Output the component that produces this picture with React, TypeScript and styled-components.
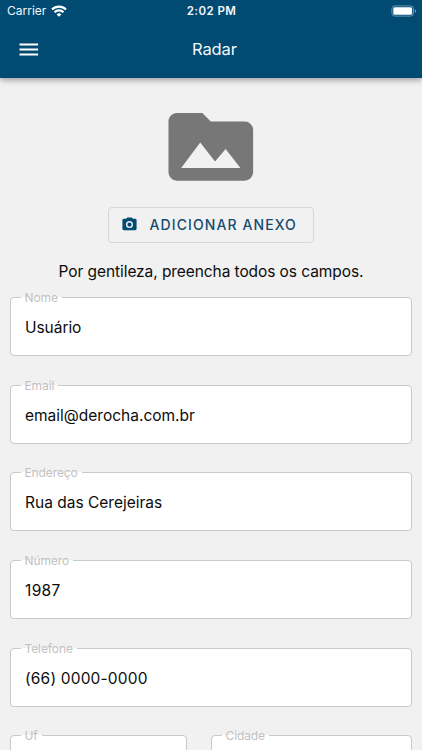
import React from "react";
import styled, { createGlobalStyle } from "styled-components";

const GlobalStyle = createGlobalStyle`
  * { box-sizing: border-box; }
  html, body { margin: 0; padding: 0; background: #f1f1f1; }
  body { height: 750px; overflow: hidden; font-family: Inter, Roboto, sans-serif; }
`;

const Screen = styled.div`
  width: 422px;
  height: 750px;
  overflow: hidden;
  display: flex;
  flex-direction: column;
  background: #f1f1f1;
`;

const Header = styled.header`
  height: 77.5px;
  flex: none;
  background: #014b73;
  color: #f2f7fa;
  box-shadow: 0 2px 6px rgba(0, 0, 0, 0.36);
`;

const StatusBar = styled.div`
  height: 22px;
  display: grid;
  grid-template-columns: 1fr auto 1fr;
  align-items: center;
  padding: 0 6px 0 7px;
`;

const Carrier = styled.div`
  display: flex;
  align-items: center;
  gap: 5px;
  font-size: 12px;
  line-height: 14px;
  letter-spacing: 0;

  svg { margin-top: -1px; }
`;

const Clock = styled.div`
  font-size: 11.5px;
  font-weight: 600;
  letter-spacing: 0.45px;
`;

const BatterySlot = styled.div`
  display: flex;
  justify-content: flex-end;
  margin-top: -1px;
  margin-right: -1px;
`;

const AppBar = styled.div`
  height: 55px;
  display: flex;
  align-items: center;
  padding-left: 17px;
`;

const MenuButton = styled.button`
  width: 24px;
  height: 24px;
  padding: 0;
  border: 0;
  background: none;
  color: inherit;
  display: flex;
`;

const Title = styled.h1`
  margin: -1px 0 0 151px;
  font-size: 16.5px;
  line-height: 20px;
  font-weight: 400;
  letter-spacing: -0.1px;
`;

const Content = styled.main`
  display: flex;
  flex-direction: column;
  padding: 18.5px 10px 0;
`;

const Folder = styled.svg`
  width: 101.6px;
  height: 101.6px;
  flex: none;
  margin-left: 149.8px;
  fill: #777;
`;

const AttachButton = styled.button`
  align-self: center;
  width: 206px;
  height: 36.6px;
  flex: none;
  margin: 9px 0 0;
  padding: 0 0 0 11.5px;
  display: flex;
  align-items: center;
  gap: 12px;
  border: 1px solid #d7d7d7;
  border-radius: 4px;
  background: transparent;
  color: #144b70;
  font: 500 14px/20px Inter, sans-serif;
  letter-spacing: 1.1px;
  white-space: nowrap;

  svg { flex: none; margin-top: -1.4px; }
`;

const AttachText = styled.span`
  margin-top: 0.2px;
`;

const Hint = styled.p`
  margin: 18.8px 0 0;
  font-size: 15.5px;
  line-height: 20px;
  letter-spacing: -0.08px;
  text-align: center;
  white-space: nowrap;
  color: #0c0c0c;
`;

const Form = styled.form`
  margin-top: 15.2px;
  display: grid;
  grid-template-columns: 177px 201px;
  column-gap: 24px;
  row-gap: 28.6px;
`;

const Field = styled.div<{ $wide?: boolean }>`
  position: relative;
  height: 59px;
  grid-column: ${(p) => (p.$wide ? "1 / -1" : "auto")};
  display: flex;
  align-items: center;
  padding: 3px 14px 0;
  border: 1px solid #c9c9c9;
  border-radius: 4px;
  background: #fff;
`;

const Label = styled.label`
  position: absolute;
  top: -8px;
  left: 9.5px;
  padding: 0 4px;
  font-size: 12px;
  line-height: 15px;
  letter-spacing: -0.1px;
  color: #c1c1c1;
  background: linear-gradient(#f1f1f1 0 7px, #fff 7px);
`;

const Value = styled.span<{ $spacing: number }>`
  font-size: 15.5px;
  line-height: 20px;
  letter-spacing: ${(p) => p.$spacing}px;
  white-space: nowrap;
  color: #0c0c0c;
`;

const fields = [
  { label: "Nome", value: "Usuário", spacing: -0.05 },
  { label: "Email", value: "email@derocha.com.br", spacing: 0 },
  { label: "Endereço", value: "Rua das Cerejeiras", spacing: 0 },
  { label: "Número", value: "1987", spacing: 0.35 },
  { label: "Telefone", value: "(66) 0000-0000", spacing: 0.17 },
];

const WifiIcon = () => (
  <svg width="16" height="12" viewBox="0 0 16 12" fill="none" stroke="#fff" strokeWidth="2.1">
    <path d="M1 4.5a10 10 0 0 1 14 0" />
    <path d="M3.5 7.3a6.2 6.2 0 0 1 9 0" />
    <path d="M5.6 9.4a3.5 3.5 0 0 1 4.8 0L8 11.7z" fill="#fff" stroke="none" />
  </svg>
);

const BatteryIcon = () => (
  <svg width="26" height="12" viewBox="0 0 26 12">
    <rect x="0.9" y="0.9" width="21.6" height="10.2" rx="3" fill="none" stroke="#6996ae" />
    <rect x="2.3" y="2.3" width="18.8" height="7.4" rx="1.5" fill="#fff" />
    <path d="M23.9 4.2c1.4.5 1.4 3.1 0 3.6z" fill="#8badc0" />
  </svg>
);

export default function App() {
  return (
    <>
      <GlobalStyle />
      <Screen>
        <Header>
          <StatusBar>
            <Carrier>
              Carrier
              <WifiIcon />
            </Carrier>
            <Clock>2:02 PM</Clock>
            <BatterySlot>
              <BatteryIcon />
            </BatterySlot>
          </StatusBar>
          <AppBar>
            <MenuButton aria-label="Menu">
              <svg width="24" height="24" viewBox="0 0 24 24" fill="#fff">
                <path d="M2.5 5.5h18.6v2H2.5zM2.5 10.6h18.6v2H2.5zM2.5 15.6h18.6v2H2.5z" />
              </svg>
            </MenuButton>
            <Title>Radar</Title>
          </AppBar>
        </Header>
        <Content>
          <Folder viewBox="0 0 24 24">
            <path d="M5 17l4.5-6 3.5 4.5 2.5-3L19 17m1-11h-8l-2-2H4c-1.11 0-2 .89-2 2v12a2 2 0 0 0 2 2h16a2 2 0 0 0 2-2V8a2 2 0 0 0-2-2z" />
          </Folder>
          <AttachButton type="button">
            <svg width="17" height="17" viewBox="0 0 24 24" fill="#014b73">
              <path d="M4 4h3l2-2h6l2 2h3a2 2 0 0 1 2 2v12a2 2 0 0 1-2 2H4a2 2 0 0 1-2-2V6a2 2 0 0 1 2-2m8 3a5 5 0 0 0-5 5 5 5 0 0 0 5 5 5 5 0 0 0 5-5 5 5 0 0 0-5-5m0 2a3 3 0 0 1 3 3 3 3 0 0 1-3 3 3 3 0 0 1-3-3 3 3 0 0 1 3-3z" />
            </svg>
            <AttachText>ADICIONAR ANEXO</AttachText>
          </AttachButton>
          <Hint>Por gentileza, preencha todos os campos.</Hint>
          <Form>
            {fields.map((f) => (
              <Field key={f.label} $wide>
                <Label>{f.label}</Label>
                <Value $spacing={f.spacing}>{f.value}</Value>
              </Field>
            ))}
            <Field>
              <Label>Uf</Label>
            </Field>
            <Field>
              <Label>Cidade</Label>
            </Field>
          </Form>
        </Content>
      </Screen>
    </>
  );
}
